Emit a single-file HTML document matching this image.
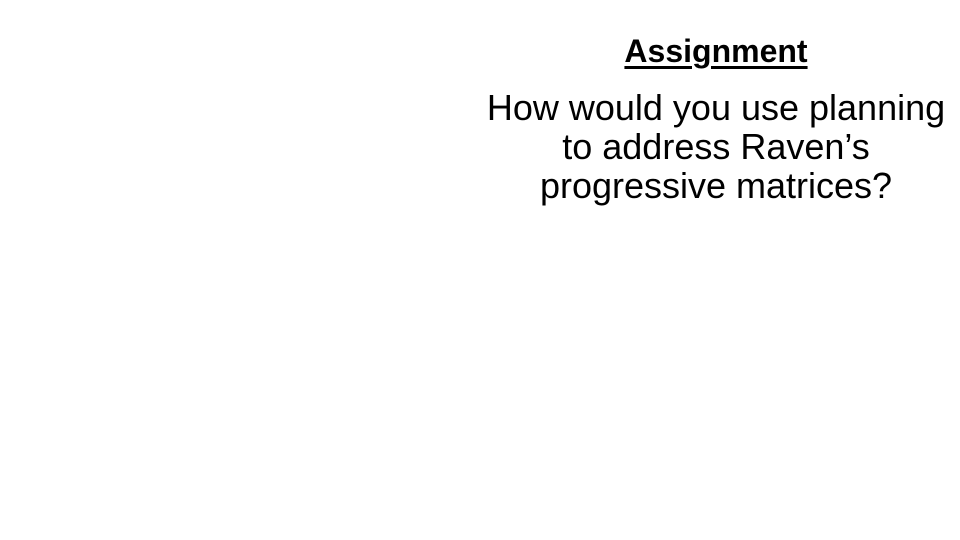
<!DOCTYPE html>
<html><head><meta charset="utf-8"><style>
html,body{margin:0;padding:0;background:#fff;}
body{width:960px;height:540px;position:relative;overflow:hidden;font-family:"Liberation Sans",sans-serif;color:#000;}
.t{position:absolute;left:476px;width:480px;text-align:center;top:32px;font-size:32px;font-weight:bold;text-decoration:underline;text-underline-offset:4px;line-height:38px;}
.b{position:absolute;left:476px;width:480px;text-align:center;top:88px;font-size:36px;line-height:39px;}
</style></head><body>
<div class="t">Assignment</div>
<div class="b">How would you use planning<br>to address Raven’s<br>progressive matrices?</div>
</body></html>
